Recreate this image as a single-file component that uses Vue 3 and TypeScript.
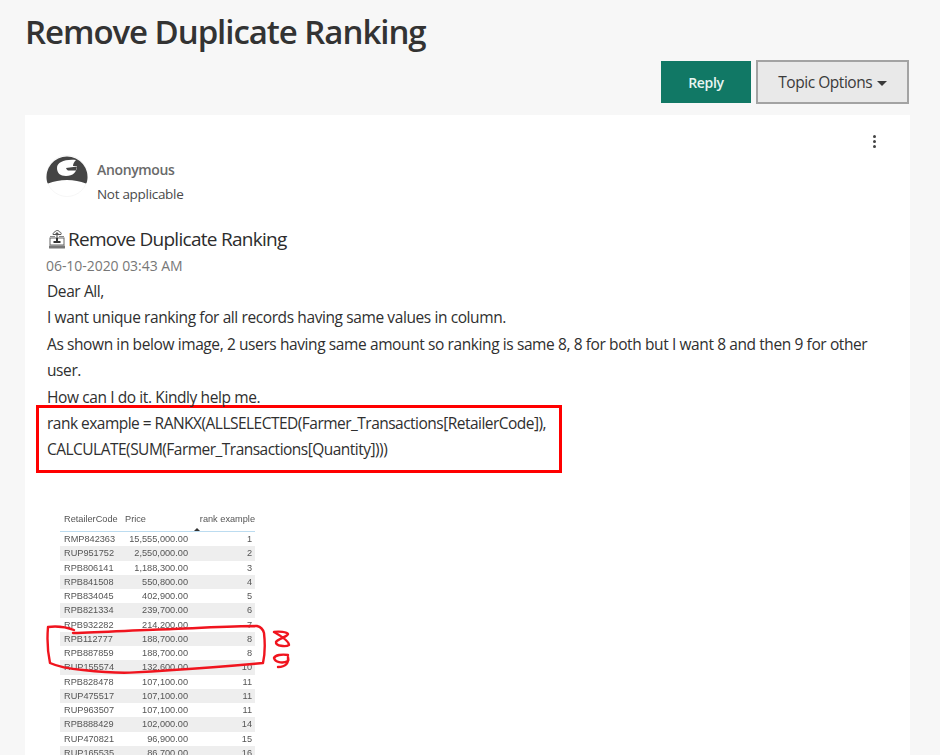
<template>
  <div class="page">
    <h1 class="page-title">Remove Duplicate Ranking</h1>

    <div class="actions">
      <button class="btn-reply">Reply</button>
      <button class="btn-options">Topic Options <span class="caret"></span></button>
    </div>

    <div class="card">
      <div class="menu-dots"><span></span><span></span><span></span></div>

      <div class="author">
        <svg class="avatar" viewBox="0 0 42 42" width="42" height="42">
          <circle cx="21" cy="21" r="20.5" fill="#fff" stroke="#f0f0f0" stroke-width="0.6" />
          <path d="M0.9 26 A20.5 20.5 0 1 1 41.1 26 C41 27 40.6 28 40 28.6 C34 26.4 28 25 21 25 C14 25 8 26.4 2 28.6 C1.4 28 1 27 0.9 26 Z" fill="#454545" />
          <path d="M11 13 C11 7 19 4 30 5 C28 7 27 9 27 11 L31 11 C31 17 27 21 20 21 C14 21 11 18 11 13 Z" fill="#fff" />
          <path d="M20 13 L31 11.5 L30 15.5 L22 15.5 C21 15 20.5 14 20 13 Z" fill="#454545" />
        </svg>
        <div class="author-text">
          <div class="author-name">Anonymous</div>
          <div class="author-rank">Not applicable</div>
        </div>
      </div>

      <div class="subject">
        <svg class="subject-icon" viewBox="0 0 18 20" width="18" height="20">
          <path d="M5 5.5 C5 3.5 6.5 3 7 3 C7.5 1 11 1 11.5 3 C13 3 13.5 4.5 13 5.5 Z" fill="none" stroke="#555" stroke-width="1" />
          <path d="M9 10 V4 M7 5.8 L9 3.8 L11 5.8" fill="none" stroke="#555" stroke-width="1.1" />
          <path d="M2 7.5 H7 M11 7.5 H16" stroke="#888" stroke-width="1" />
          <rect x="2" y="9" width="14" height="7" fill="#fff" stroke="#666" stroke-width="1" />
          <rect x="8" y="9" width="2" height="5" fill="#333" />
          <rect x="5.5" y="12" width="7" height="2" fill="#333" />
          <rect x="1" y="16.5" width="16" height="3" rx="0.5" fill="#777" />
        </svg>
        <span>Remove Duplicate Ranking</span>
      </div>
      <div class="post-date">06-10-2020 03:43 AM</div>

      <div class="post-body">
        <p>Dear All,</p>
        <p>I want unique ranking for all records having same values in column.</p>
        <p>As shown in below image, 2 users having same amount so ranking is same 8, 8 for both but I want 8 and then 9 for other user.</p>
        <p>How can I do it. Kindly help me.</p>
        <div class="formula">
          <p>rank example = RANKX(ALLSELECTED(Farmer_Transactions[RetailerCode]),</p>
          <p>CALCULATE(SUM(Farmer_Transactions[Quantity])))</p>
        </div>
      </div>

      <div class="shot">
        <div class="shot-head">
          <span class="col-code">RetailerCode</span>
          <span class="col-price head-price">Price</span>
          <span class="col-rank">rank example</span>
          <span class="sort-mark"></span>
        </div>
        <div
          v-for="(row, index) in rows"
          :key="row.code"
          class="shot-row"
          :class="index % 2 === 1 ? 'shaded' : ''"
        >
          <span class="col-code">{{ row.code }}</span>
          <span class="col-price">{{ row.price }}</span>
          <span class="col-rank">{{ row.rank }}</span>
        </div>

        <!-- pen marks drawn over the table -->
        <svg class="scribble" viewBox="0 0 260 260" width="260" height="260">
          <g fill="none" stroke="#f0141e" stroke-width="2.4" stroke-linecap="round" stroke-linejoin="round">
            <path d="M28 121 C20 118 10 117 2 118 C1 130 2 145 4 154 C15 159 25 160 37 161 C55 163 70 164 84 163.6 C100 163 115 162 127 161 C160 159 195 156 217 154 C219 145 219 133 218 124 C217 120 215 118 211 117 C185 117 155 119 127 120 C95 121 60 123 27 124" />
            <path d="M228 123 C233 122 241 123 242 125 C241 128 232 130 230 133 C229 137 240 138 243 136 C243 132 235 127 228 123" />
            <path d="M242 146 C236 145 229 146 228 149 C229 153 236 155 242 152 C243 151 242 150 242 148 C243 154 240 158 232 158" />
          </g>
        </svg>
      </div>
    </div>
  </div>
</template>

<script setup lang="ts">
type Row = { code: string; price: string; rank: number }

const rows: Row[] = [
  { code: 'RMP842363', price: '15,555,000.00', rank: 1 },
  { code: 'RUP951752', price: '2,550,000.00', rank: 2 },
  { code: 'RPB806141', price: '1,188,300.00', rank: 3 },
  { code: 'RPB841508', price: '550,800.00', rank: 4 },
  { code: 'RPB834045', price: '402,900.00', rank: 5 },
  { code: 'RPB821334', price: '239,700.00', rank: 6 },
  { code: 'RPB932282', price: '214,200.00', rank: 7 },
  { code: 'RPB112777', price: '188,700.00', rank: 8 },
  { code: 'RPB887859', price: '188,700.00', rank: 8 },
  { code: 'RUP155574', price: '132,600.00', rank: 10 },
  { code: 'RPB828478', price: '107,100.00', rank: 11 },
  { code: 'RUP475517', price: '107,100.00', rank: 11 },
  { code: 'RUP963507', price: '107,100.00', rank: 11 },
  { code: 'RPB888429', price: '102,000.00', rank: 14 },
  { code: 'RUP470821', price: '96,900.00', rank: 15 },
  { code: 'RUP165535', price: '86,700.00', rank: 16 },
]
</script>

<style>
html, body {
  margin: 0;
  background: #f7f7f7;
  overflow: hidden;
}
</style>

<style scoped>
* {
  box-sizing: border-box;
  margin: 0;
  padding: 0;
}

.page {
  height: 755px;
  overflow: hidden;
  background: #f7f7f7;
  padding: 10px 30px 0 25px;
  font-family: "Open Sans", "Noto Sans", sans-serif;
  color: #2f2f2f;
}

.page-title {
  font-size: 33px;
  font-weight: 600;
  line-height: 44px;
  color: #333;
  letter-spacing: -1.05px;
}

.actions {
  display: flex;
  justify-content: flex-end;
  align-items: center;
  gap: 5px;
  margin-top: 6px;
  margin-right: 1px;
}

.btn-reply {
  width: 90px;
  height: 42px;
  border: 0;
  background: #117865;
  color: #e8f5f2;
  font: 600 14px "Open Sans", sans-serif;
  letter-spacing: -0.3px;
}

.btn-options {
  width: 153px;
  height: 44px;
  border: 2px solid #a3a3a3;
  background: #e9e9e9;
  color: #3a3a3a;
  font: 400 15.5px "Open Sans", sans-serif;
  letter-spacing: -0.45px;
}

.caret {
  display: inline-block;
  width: 0;
  height: 0;
  margin-left: 1px;
  vertical-align: 2px;
  border-left: 5px solid transparent;
  border-right: 5px solid transparent;
  border-top: 5px solid #3a3a3a;
}

.card {
  position: relative;
  height: 640px;
  margin-top: 11px;
  background: #fff;
  padding: 40px 20px 0 21px;
}

.menu-dots {
  position: absolute;
  top: 20px;
  right: 34px;
  display: flex;
  flex-direction: column;
  gap: 2px;
}

.menu-dots span {
  width: 3px;
  height: 3px;
  border-radius: 50%;
  background: #444;
}

.author {
  display: flex;
  gap: 9px;
}

.avatar {
  display: block;
}

.author-name {
  margin-top: 5px;
  font-size: 14px;
  font-weight: 600;
  line-height: 20px;
  color: #6a6a6a;
  letter-spacing: -0.35px;
}

.author-rank {
  margin-top: 4px;
  font-size: 13.5px;
  line-height: 20px;
  color: #4a4a4a;
  letter-spacing: -0.3px;
}

.subject {
  display: flex;
  align-items: center;
  gap: 2px;
  margin-top: 23px;
  margin-left: 2px;
  font-size: 19px;
  line-height: 24px;
  color: #2c2c2c;
  letter-spacing: -0.72px;
}

.post-date {
  margin-top: 5px;
  font-size: 14px;
  line-height: 20px;
  color: #777;
  letter-spacing: -0.05px;
}

.post-body {
  margin-top: 2px;
  margin-left: 1px;
  width: 830px;
  font-size: 15.5px;
  line-height: 26.4px;
  color: #2f2f2f;
  letter-spacing: -0.4px;
}

.formula {
  width: 526px;
  height: 68px;
  margin-top: -5px;
  margin-left: -11px;
  padding: 2px 8px;
  border: 3px solid #f00;
  white-space: nowrap;
  letter-spacing: -0.52px;
}

.shot {
  position: relative;
  width: 195px;
  margin-top: 36px;
  margin-left: 14px;
  font-family: "Liberation Sans", Arial, sans-serif;
  font-size: 9.2px;
  color: #555;
  filter: blur(0.5px);
}

.shot-head {
  position: relative;
  display: flex;
  height: 23px;
  padding-top: 4px;
  border-bottom: 1px solid #bcdcf0;
  line-height: 13px;
}

.shot-row {
  display: flex;
  height: 14.25px;
  line-height: 14.25px;
}

.shaded {
  background: #eeeeee;
}

.col-code {
  width: 60px;
  padding-left: 4px;
}

.col-price {
  width: 68px;
  text-align: right;
}

.head-price {
  text-align: left;
  padding-left: 5px;
}

.col-rank {
  width: 67px;
  text-align: right;
}

.shot-row .col-rank {
  padding-right: 3px;
}

.sort-mark {
  position: absolute;
  left: 134px;
  top: 19px;
  width: 0;
  height: 0;
  border-left: 3px solid transparent;
  border-right: 3px solid transparent;
  border-bottom: 3px solid #333;
}

.scribble {
  position: absolute;
  top: 0;
  left: -14px;
  overflow: visible;
}
</style>
